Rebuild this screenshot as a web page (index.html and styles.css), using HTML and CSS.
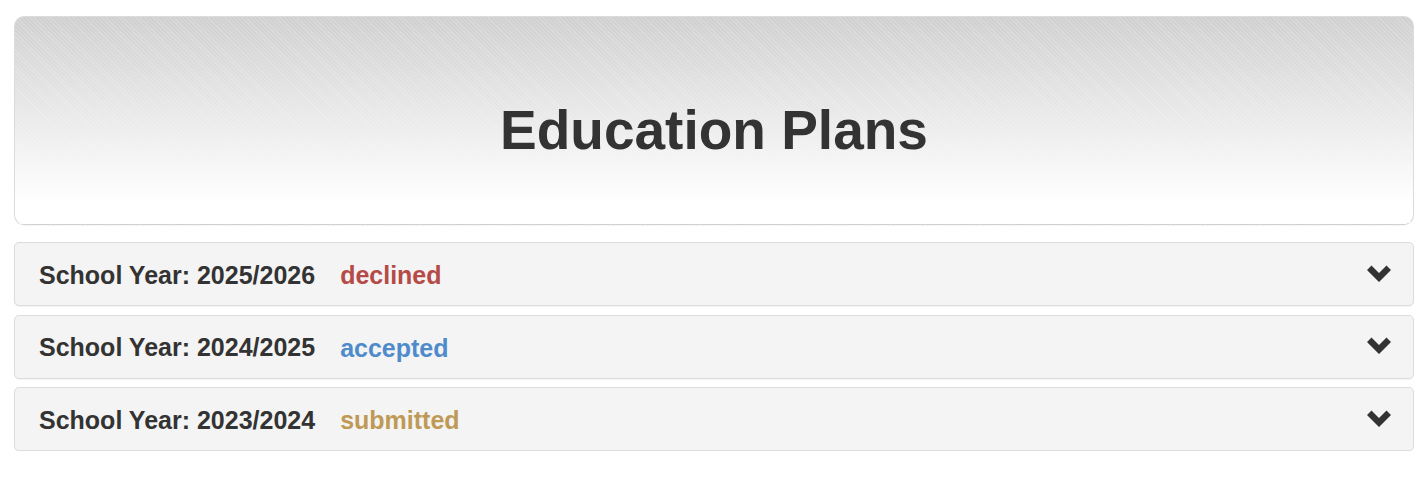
FILE: index.html
```html
<!DOCTYPE html>
<html>
<head>
    <title>Education Plans</title>
    <meta name="viewport" content="width=device-width, initial-scale=1.0">
    <link rel="stylesheet" href="styles.css">
</head>
<body>
    <div class="page">
        <div class="page-header">
            <h1>Education Plans</h1>
        </div>

        <div class="plan-list">
            <div class="plan-panel">
                <span class="plan-year">School Year: 2025/2026</span>
                <span class="plan-status declined">declined</span>
                <svg class="chevron" width="24" height="17" viewBox="0 0 24 17">
                    <path d="M0 5 L4.5 0.5 L12 8 L19.5 0.5 L24 5 L12 17 Z" fill="#333"/>
                </svg>
            </div>
            <div class="plan-panel">
                <span class="plan-year">School Year: 2024/2025</span>
                <span class="plan-status accepted">accepted</span>
                <svg class="chevron" width="24" height="17" viewBox="0 0 24 17">
                    <path d="M0 5 L4.5 0.5 L12 8 L19.5 0.5 L24 5 L12 17 Z" fill="#333"/>
                </svg>
            </div>
            <div class="plan-panel">
                <span class="plan-year">School Year: 2023/2024</span>
                <span class="plan-status submitted">submitted</span>
                <svg class="chevron" width="24" height="17" viewBox="0 0 24 17">
                    <path d="M0 5 L4.5 0.5 L12 8 L19.5 0.5 L24 5 L12 17 Z" fill="#333"/>
                </svg>
            </div>
        </div>
    </div>
</body>
</html>
```

FILE: styles.css
```css
/* General styling */
body {
    margin: 0;
    background: #fff;
    font-family: "Liberation Sans", Helvetica, Arial, sans-serif;
    color: #333;
}
.page {
    padding: 16px 6px 0 14px;
}

/* Header box */
.page-header {
    height: 207px;
    border: 1px solid #dcdcdc;
    border-bottom: 1px dashed #cfcfcf;
    border-radius: 10px;
    box-shadow: 0 1px 1px rgba(0, 0, 0, 0.04);
    background:
        repeating-linear-gradient(45deg, rgba(255, 255, 255, 0.18) 0, rgba(255, 255, 255, 0.18) 1px, transparent 1px, transparent 3px),
        linear-gradient(to bottom, #d0d0d0, #e8e8e8 45%, #ffffff 90%);
    text-align: center;
}
.page-header h1 {
    margin: 0;
    padding-top: 81px;
    font-size: 55px;
    line-height: 64px;
    font-weight: bold;
    color: #333;
}

/* Plans */
.plan-list {
    display: flex;
    flex-direction: column;
    gap: 8.5px;
    margin-top: 17px;
}
.plan-panel {
    display: flex;
    align-items: center;
    height: 62px;
    padding: 0 22px 0 24px;
    background-color: #f4f4f4;
    border: 1px solid #dcdcdc;
    border-radius: 5px;
    box-shadow: 0 1px 1px rgba(0, 0, 0, 0.05);
}
.plan-year {
    font-size: 25px;
    font-weight: bold;
    margin-top: 2px;
}
.plan-status {
    font-size: 25px;
    font-weight: bold;
    margin-left: 25px;
    margin-top: 3px;
}
.declined { color: #b54a47; }
.accepted { color: #4f8bcb; }
.submitted { color: #bf9a57; }

.chevron {
    margin-left: auto;
    margin-top: -2px;
}
```
